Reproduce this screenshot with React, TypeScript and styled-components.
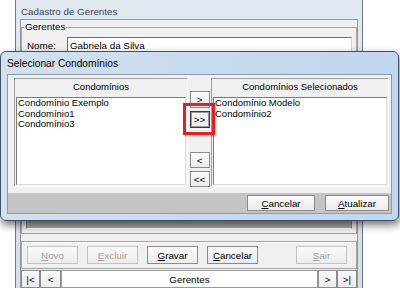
import styled, { createGlobalStyle } from 'styled-components'

const GlobalStyle = createGlobalStyle`
  html, body {
    margin: 0;
    padding: 0;
    background: #ffffff;
  }
  body {
    font-family: 'Liberation Sans', Arial, sans-serif;
    font-size: 9.5px;
    color: #000;
  }
  * {
    box-sizing: border-box;
  }
`

const Desktop = styled.div`
  position: relative;
  width: 400px;
  height: 288px;
  overflow: hidden;
  background: #fff;
`

const BackWindow = styled.div`
  position: absolute;
  left: 15px;
  top: -8px;
  width: 348px;
  height: 302px;
  display: flex;
  flex-direction: column;
  padding: 0 4px 4px;
  border: 1px solid #6d7885;
  border-radius: 6px;
  background: linear-gradient(180deg, #e2e9f1 0%, #d5dfe9 100%);
`

const BackTitle = styled.div`
  height: 26px;
  padding: 12px 0 0 1px;
  font-size: 9.8px;
  line-height: 14px;
  color: #3b4654;
`

const Client = styled.div`
  flex: 1;
  display: flex;
  flex-direction: column;
  background: #f0f0f0;
  border: 1px solid #8e9aa9;
  min-height: 0;
`

const GroupBox = styled.fieldset`
  flex: 1;
  display: flex;
  flex-direction: column;
  margin: 1px 0 0;
  padding: 0 4px 4px;
  border: 1px solid #a3a3a3;
  min-width: 0;
`

const Legend = styled.legend`
  margin-left: -2px;
  padding: 0 1px;
  font-size: 9.8px;
  line-height: 12px;
`

const FieldRow = styled.div`
  display: flex;
  align-items: center;
  margin-top: 4px;
`

const FieldLabel = styled.span`
  width: 41px;
  padding-left: 1px;
  font-size: 9.8px;
`

const TextBox = styled.div`
  flex: 1;
  height: 17px;
  padding-left: 2px;
  line-height: 15px;
  font-size: 9.8px;
  background: #fff;
  border: 1px solid;
  border-color: #6f6f6f #cfcfcf #cfcfcf #6f6f6f;
`

const Grid = styled.div`
  flex: 1;
  margin-top: 4px;
  background: #a9a9a9;
  border: 1px solid #8a8a8a;
  border-bottom-color: #ffffff;
`

const ButtonPanel = styled.div`
  display: flex;
  align-items: center;
  gap: 9px;
  height: 28px;
  margin-top: 7px;
  padding: 0 5px;
  border: 1px solid #a3a3a3;
  box-shadow: inset 1px 1px 0 #fff;
`

interface BtnProps {
  $w: number
  $h: number
  $off?: boolean
  $focus?: boolean
  $push?: number
}

const Btn = styled.div<BtnProps>`
  display: flex;
  align-items: center;
  justify-content: center;
  flex: none;
  width: ${({ $w }) => $w}px;
  height: ${({ $h }) => $h}px;
  margin-left: ${({ $push }) => ($push ? `${$push}px` : '0')};
  font-size: 9.8px;
  color: ${({ $off }) => ($off ? '#a3a3a3' : '#000')};
  background: linear-gradient(180deg, #fafafa 0%, #ececec 100%);
  border: 1px solid ${({ $off, $focus }) => ($focus ? '#3a3a3a' : $off ? '#c2c2c2' : '#8c8c8c')};
  box-shadow: ${({ $focus }) => ($focus ? 'inset 0 0 0 1px #9a9a9a' : 'none')};
`

const NavRow = styled.div`
  display: flex;
  height: 18px;
  margin-top: 1px;
`

const NavField = styled.div`
  flex: 1;
  display: flex;
  align-items: center;
  justify-content: center;
  font-size: 9.8px;
  background: #fff;
  border: 1px solid #9a9a9a;
`

const FrontWindow = styled.div`
  position: absolute;
  left: 0;
  top: 51px;
  width: 399px;
  height: 170px;
  display: flex;
  flex-direction: column;
  padding: 0 6px 6px;
  border: 1px solid #3f5169;
  border-radius: 6px;
  background: linear-gradient(90deg, #d3e1ee 0%, #c6daee 60%, #c0d7ef 100%);
  box-shadow: 1px 4px 8px rgba(0, 0, 0, 0.55);
`

const FrontTitle = styled.div`
  display: flex;
  align-items: center;
  height: 22px;
  font-size: 10.2px;
`

const DialogBody = styled.div`
  display: flex;
  height: 118px;
  padding: 3px 2px 6px 6px;
`

const ListPanel = styled.div<{ $w: number }>`
  display: flex;
  flex-direction: column;
  width: ${({ $w }) => $w}px;
  padding: 0 1px 1px;
  border: 1px solid;
  border-color: #a0a0a0 #ffffff #ffffff #a0a0a0;
`

const ListHeader = styled.div`
  height: 18px;
  line-height: 16px;
  text-align: center;
`

const ListBox = styled.div`
  flex: 1;
  padding: 0 1px;
  line-height: 10.5px;
  background: #fff;
  border: 1px solid #7b7b7b;
  border-right-color: #dcdcdc;
  border-bottom-color: #dcdcdc;
`

const MoveColumn = styled.div`
  display: flex;
  flex-direction: column;
  align-items: center;
  width: 23px;
  padding-top: 13px;
  gap: 3px;
`

const Spacer = styled.div`
  height: 19px;
`

const Footer = styled.div`
  display: flex;
  align-items: center;
  justify-content: flex-end;
  gap: 10px;
  height: 20px;
  padding-right: 2px;
  background: #c4c4c4;
`

const Highlight = styled.div`
  position: absolute;
  left: 183px;
  top: 103px;
  width: 32px;
  height: 32px;
  border: 3px solid #d6262c;
  box-shadow: 1px 1px 2px rgba(0, 0, 0, 0.35);
`

const available = ['Condomínio Exemplo', 'Condomínio1', 'Condomínio3']
const selected = ['Condomínio Modelo', 'Condomínio2']

const App: React.FC = () => {
  return (
    <Desktop>
      <GlobalStyle />
      <BackWindow>
        <BackTitle>Cadastro de Gerentes</BackTitle>
        <Client>
          <GroupBox>
            <Legend>Gerentes</Legend>
            <FieldRow>
              <FieldLabel>Nome:</FieldLabel>
              <TextBox>Gabriela da Silva</TextBox>
            </FieldRow>
            <Grid />
          </GroupBox>
          <ButtonPanel>
            <Btn $w={51} $h={18} $off>
              <u>N</u>ovo
            </Btn>
            <Btn $w={51} $h={18} $off>
              <u>E</u>xcluir
            </Btn>
            <Btn $w={51} $h={18}>
              <u>G</u>ravar
            </Btn>
            <Btn $w={51} $h={18}>
              <u>C</u>ancelar
            </Btn>
            <Btn $w={51} $h={18} $off $push={29}>
              <u>S</u>air
            </Btn>
          </ButtonPanel>
          <NavRow>
            <Btn $w={19} $h={18}>|&lt;</Btn>
            <Btn $w={21} $h={18}>&lt;</Btn>
            <NavField>Gerentes</NavField>
            <Btn $w={19} $h={18}>&gt;</Btn>
            <Btn $w={20} $h={18}>&gt;|</Btn>
          </NavRow>
        </Client>
      </BackWindow>

      <FrontWindow>
        <FrontTitle>Selecionar Condomínios</FrontTitle>
        <Client>
          <DialogBody>
            <ListPanel $w={174}>
              <ListHeader>Condomínios</ListHeader>
              <ListBox>
                {available.map((item) => (
                  <div key={item}>{item}</div>
                ))}
              </ListBox>
            </ListPanel>
            <MoveColumn>
              <Btn $w={20} $h={17}>&gt;</Btn>
              <Btn $w={20} $h={17} $focus>
                &gt;&gt;
              </Btn>
              <Spacer />
              <Btn $w={20} $h={16}>&lt;</Btn>
              <Btn $w={20} $h={16}>&lt;&lt;</Btn>
            </MoveColumn>
            <ListPanel $w={178}>
              <ListHeader>Condomínios Selecionados</ListHeader>
              <ListBox>
                {selected.map((item) => (
                  <div key={item}>{item}</div>
                ))}
              </ListBox>
            </ListPanel>
          </DialogBody>
          <Footer>
            <Btn $w={68} $h={16}>
              <u>C</u>ancelar
            </Btn>
            <Btn $w={64} $h={16}>
              <u>A</u>tualizar
            </Btn>
          </Footer>
        </Client>
      </FrontWindow>

      <Highlight />
    </Desktop>
  )
}

export default App
